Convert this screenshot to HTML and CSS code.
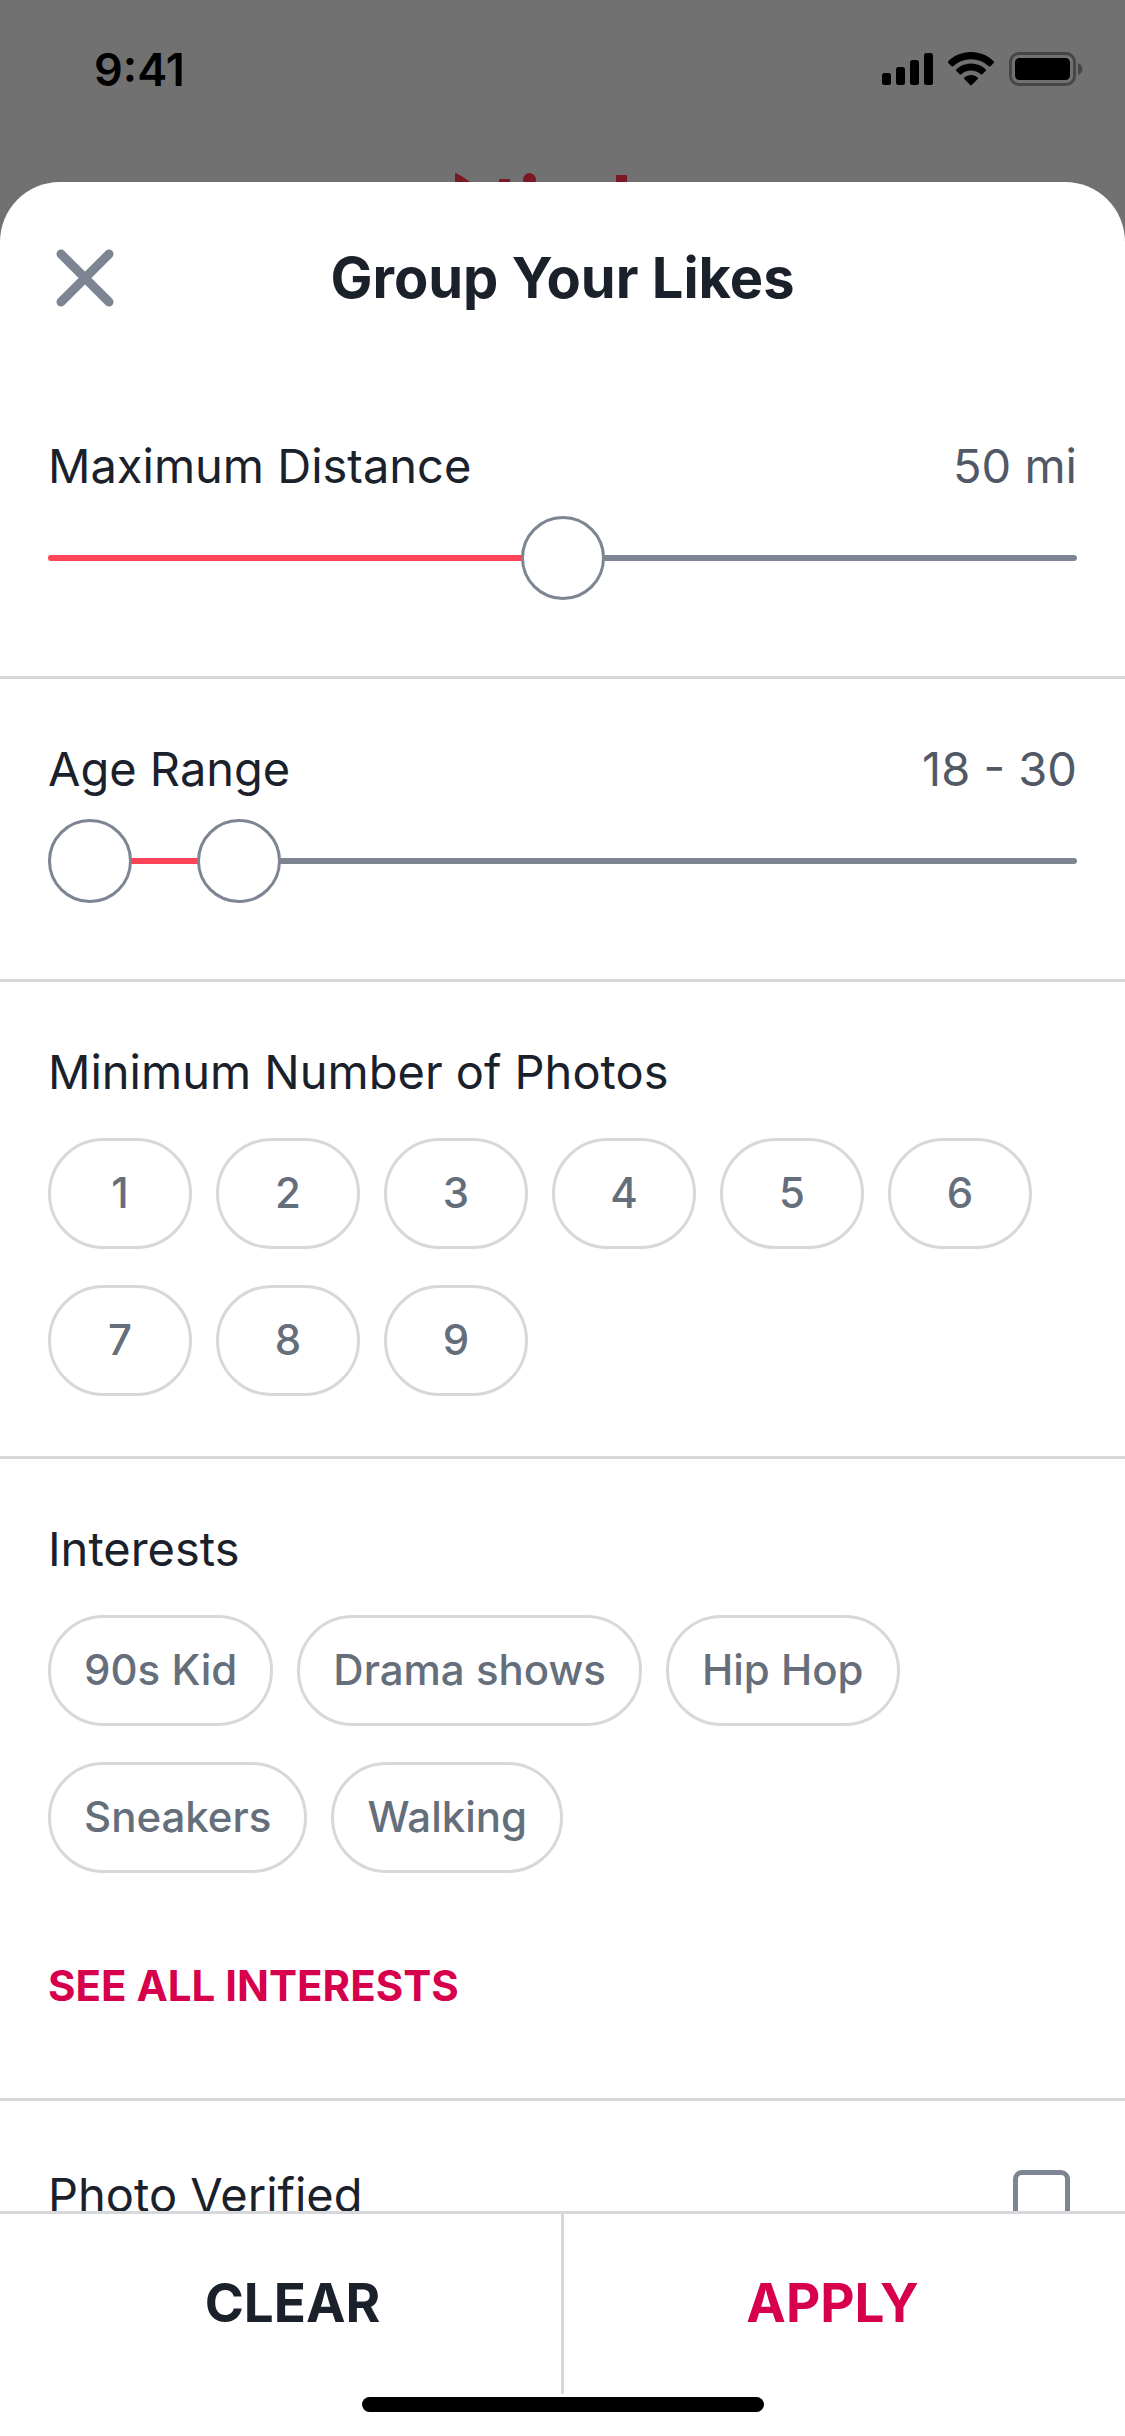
FILE: index.html
```html
<!DOCTYPE html>
<html lang="en">
<head>
    <meta charset="UTF-8">
    <meta name="viewport" content="width=device-width, initial-scale=1.0">
    <title>Group Your Likes</title>
    <link rel="stylesheet" href="styles.css">
</head>
<body>
    <div class="backdrop">
        <div class="status-bar">
            <span class="time">9:41</span>
            <svg class="status-icons" width="202" height="36" viewBox="0 0 202 36">
                <!-- signal -->
                <rect x="1" y="22" width="9" height="12" rx="2.5"/>
                <rect x="15" y="16" width="9" height="18" rx="2.5"/>
                <rect x="29" y="9" width="9" height="25" rx="2.5"/>
                <rect x="43" y="2" width="9" height="32" rx="2.5"/>
                <!-- wifi -->
                <path d="M90 1C81 1 73 4.500 67.300 10.200Q66.500 11 67.300 11.900L70.500 15.200Q71.300 16 72.200 15.200A26 26 0 0 1 107.800 15.200Q108.700 16 109.500 15.200L112.700 11.900Q113.500 11 112.700 10.200C107 4.500 99 1 90 1Z"/>
                <path d="M90 12.500C84.300 12.500 79.200 14.700 75.400 18.200Q74.500 19 75.400 19.900L78.700 23.300Q79.500 24 80.300 23.300A14.500 14.500 0 0 1 99.700 23.300Q100.500 24 101.300 23.300L104.600 19.900Q105.500 19 104.600 18.200C100.800 14.700 95.700 12.500 90 12.500Z"/>
                <path d="M90 24C87.400 24 85.100 24.900 83.300 26.400Q82.500 27.200 83.300 28L89.200 34Q90 34.800 90.800 34L96.700 28Q97.500 27.200 96.700 26.400C94.900 24.900 92.600 24 90 24Z"/>
                <!-- battery -->
                <rect x="129.500" y="2.500" width="64" height="31" rx="8.500" fill="none" stroke="#464646" stroke-width="3"/>
                <rect x="134" y="7" width="55" height="22" rx="4.500"/>
                <path d="M197 12Q201.500 14 201.500 18T197 24Z" fill="#464646"/>
            </svg>
        </div>
        <!-- top of the logo, the rest is behind the sheet -->
        <svg class="logo" width="220" height="10" viewBox="0 0 220 10" fill="#7c1823">
            <path d="M2 1.500Q2 0.500 2.800 1Q11 5 17 10H2Z"/>
            <rect x="46" y="7" width="11" height="3"/>
            <circle cx="76.500" cy="7.500" r="6.500"/>
            <rect x="163" y="3" width="11" height="7"/>
        </svg>
    </div>

    <div class="sheet">
        <div class="sheet-header">
            <button class="close" aria-label="Close">
                <svg width="58" height="58" viewBox="0 0 58 58" fill="none" stroke="#7c8591" stroke-width="9" stroke-linecap="round">
                    <path d="M5 5L53 53M53 5L5 53"/>
                </svg>
            </button>
            <h1>Group Your Likes</h1>
        </div>

        <div class="filters">
            <div class="section">
                <div class="row">
                    <label for="distance">Maximum Distance</label>
                    <output for="distance">50 mi</output>
                </div>
                <div class="slider">
                    <input type="range" id="distance" min="0" max="100" value="50" style="--to: 50%">
                </div>
            </div>

            <div class="section">
                <div class="row">
                    <label for="age-min">Age Range</label>
                    <output for="age-min age-max">18 - 30</output>
                </div>
                <div class="slider">
                    <input type="range" id="age-min" min="18" max="94" value="18" style="--to: 18%">
                    <input type="range" id="age-max" class="upper" min="18" max="94" value="30" aria-label="Maximum age">
                </div>
            </div>

            <div class="section chips-section">
                <h2>Minimum Number of Photos</h2>
                <div class="chips numbers">
                    <button class="chip">1</button>
                    <button class="chip">2</button>
                    <button class="chip">3</button>
                    <button class="chip">4</button>
                    <button class="chip">5</button>
                    <button class="chip">6</button>
                    <button class="chip">7</button>
                    <button class="chip">8</button>
                    <button class="chip">9</button>
                </div>
            </div>

            <div class="section interests">
                <h2>Interests</h2>
                <div class="chips">
                    <button class="chip">90s Kid</button>
                    <button class="chip">Drama shows</button>
                    <button class="chip">Hip Hop</button>
                    <button class="chip">Sneakers</button>
                    <button class="chip">Walking</button>
                </div>
                <a class="see-all" href="#">SEE ALL INTERESTS</a>
            </div>

            <div class="section verified">
                <div class="row">
                    <label for="verified">Photo Verified</label>
                    <input type="checkbox" id="verified">
                </div>
            </div>
        </div>

        <div class="footer">
            <div class="actions">
                <button class="clear">CLEAR</button>
                <button class="apply">APPLY</button>
            </div>
            <div class="home-indicator"></div>
        </div>
    </div>
</body>
</html>
```
FILE: styles.css
```css
* {
    box-sizing: border-box;
}
body {
    margin: 0;
    height: 100vh;
    display: flex;
    flex-direction: column;
    overflow: hidden;
    background-color: #717171;
    color: #1b212b;
    font-family: Inter, "Liberation Sans", sans-serif;
}
h1, h2 {
    margin: 0;
}
button {
    font-family: inherit;
    padding: 0;
    border: none;
    background: none;
    cursor: pointer;
}
.backdrop {
    display: flex;
    flex-direction: column;
    align-items: center;
}
.status-bar {
    width: 100%;
    height: 172px;
    padding: 42px 42px 0 94px;
    display: flex;
    justify-content: space-between;
    align-items: flex-start;
    color: #000;
}
.time {
    font-size: 45px;
    line-height: 56px;
    font-weight: 600;
}
.status-icons {
    margin-top: 9px;
}
.logo {
    display: block;
}

/* Sheet */
.sheet {
    flex: 1;
    min-height: 0;
    display: flex;
    flex-direction: column;
    background-color: #fff;
    border-radius: 60px 60px 0 0;
    overflow: hidden;
}
.sheet-header {
    display: grid;
    grid-template-columns: 58px 1fr 58px;
    align-items: center;
    padding: 62px 56px 64px;
}
.sheet-header h1 {
    font-size: 56px;
    line-height: 68px;
    font-weight: 700;
    text-align: center;
}
.close svg {
    display: block;
}
.filters {
    flex: 1;
    min-height: 0;
    overflow: hidden;
}
.section {
    padding: 62px 48px 76px;
    border-bottom: 3px solid #d6d8dc;
}
.row {
    display: flex;
    justify-content: space-between;
}
.row label, .row output, .section h2 {
    font-size: 47px;
    line-height: 56px;
    font-weight: 400;
}
.row output {
    color: #505965;
}

/* Sliders */
.slider {
    display: grid;
    margin-top: 22px;
}
.slider input {
    grid-area: 1 / 1;
    width: 100%;
    height: 84px;
    margin: 0;
    background: none;
    appearance: none;
    -webkit-appearance: none;
}
.slider input::-webkit-slider-runnable-track {
    height: 6px;
    border-radius: 3px;
    background: linear-gradient(to right, #fd4459 var(--to), #7c8591 var(--to));
}
.slider input::-webkit-slider-thumb {
    -webkit-appearance: none;
    width: 84px;
    height: 84px;
    margin-top: -39px;
    border: 3px solid #7c8591;
    border-radius: 50%;
    background-color: #fff;
    pointer-events: auto;
}
.slider .upper {
    pointer-events: none;
}
.slider .upper::-webkit-slider-runnable-track {
    background: none;
}

/* Chips */
.chips-section {
    padding-bottom: 60px;
}
.chips {
    display: flex;
    flex-wrap: wrap;
    gap: 36px 24px;
    margin-top: 38px;
}
.chip {
    height: 111px;
    padding: 0 33px 3px;
    border: 3px solid #d6d8dc;
    border-radius: 56px;
    color: #656e7b;
    font-size: 42px;
    font-weight: 500;
}
.numbers .chip {
    width: 144px;
}
.interests {
    padding-bottom: 84px;
}
.see-all {
    display: block;
    margin-top: 85px;
    color: #d6004c;
    font-size: 42px;
    line-height: 56px;
    font-weight: 700;
    text-decoration: none;
}
.verified {
    padding-top: 66px;
}
.verified input {
    appearance: none;
    -webkit-appearance: none;
    width: 57px;
    height: 57px;
    margin: 3px 7px 0 0;
    border: 5px solid #7c8591;
    border-radius: 9px;
}

/* Footer */
.footer {
    border-top: 3px solid #d6d8dc;
    padding-bottom: 24px;
}
.actions {
    display: flex;
    height: 180px;
    padding: 0 24px;
}
.actions button {
    flex: 1;
    padding-bottom: 3px;
    font-size: 53px;
    font-weight: 700;
}
.clear {
    color: #1b212b;
}
.actions .clear {
    border-right: 3px solid #d6d8dc;
}
.apply {
    color: #d6004c;
}
.home-indicator {
    width: 402px;
    height: 15px;
    margin: 3px auto 0;
    border-radius: 8px;
    background-color: #000;
}
```
